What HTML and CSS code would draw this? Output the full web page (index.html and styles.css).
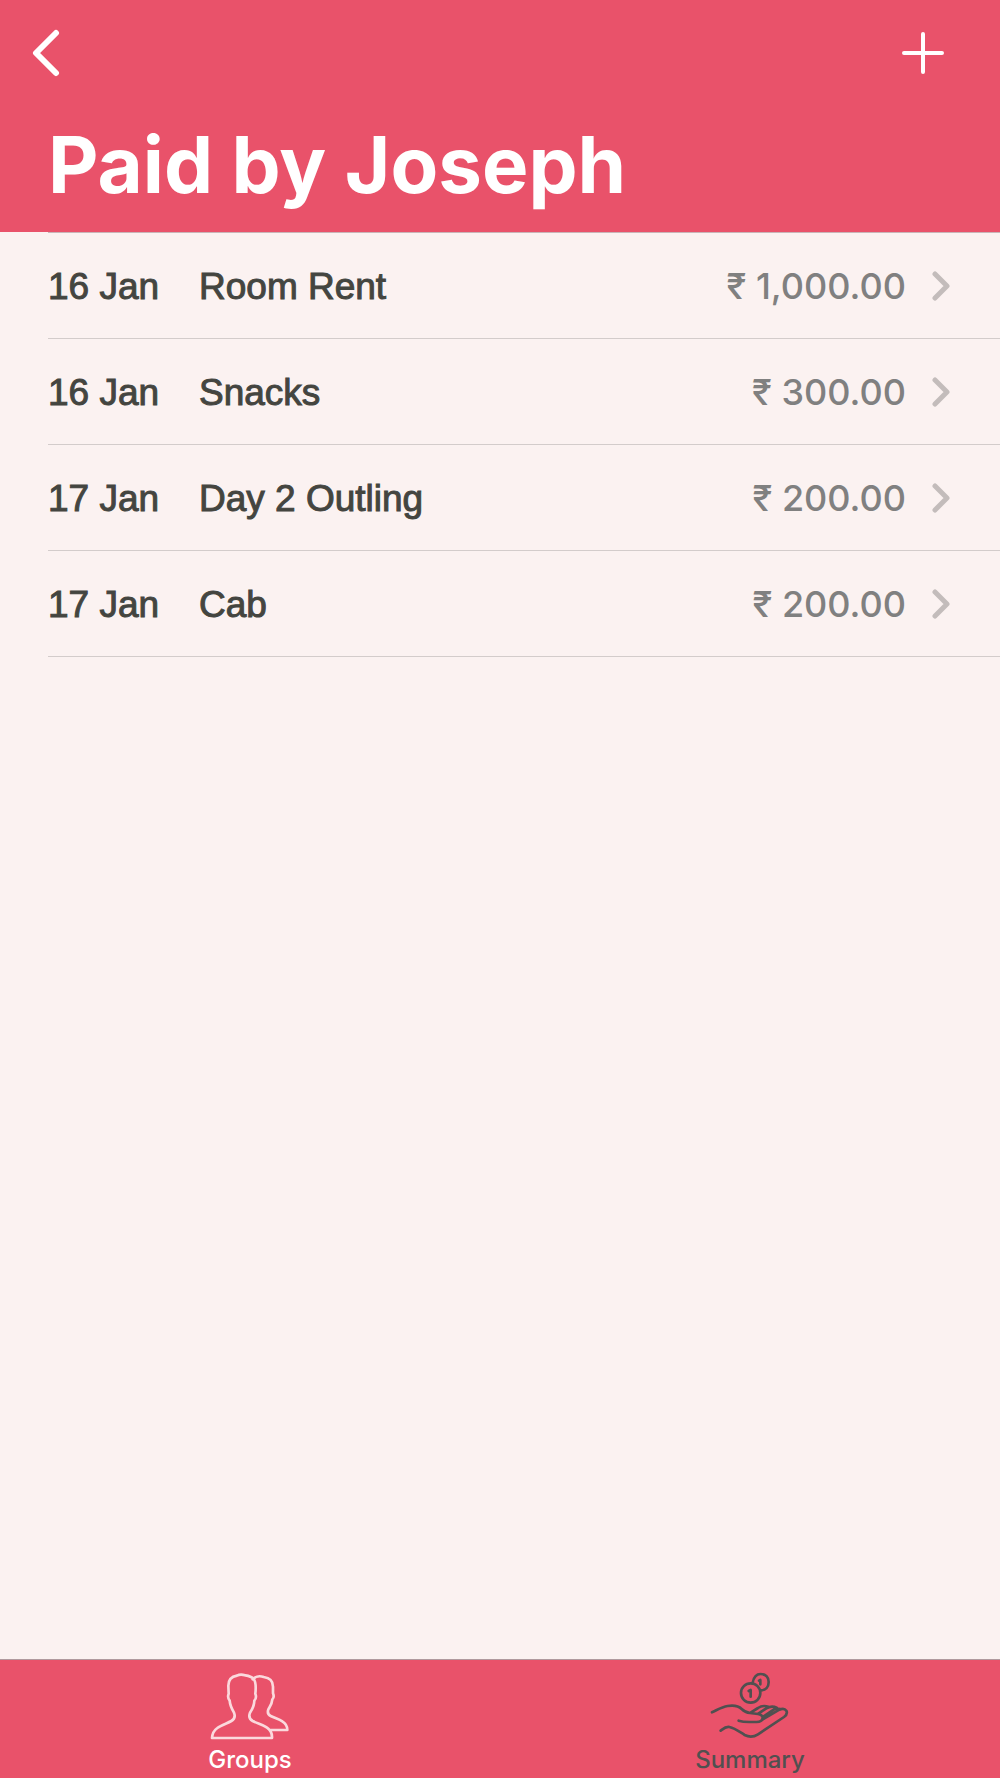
FILE: index.html
```html
<!DOCTYPE html>
<html lang="en">
<head>
<meta charset="utf-8">
<meta name="viewport" content="width=device-width, initial-scale=1">
<title>Paid by Joseph</title>
<link rel="stylesheet" href="styles.css">
</head>
<body>
<header class="header">
  <div class="nav">
    <button class="icon-button" type="button" aria-label="Back">
      <svg class="icon-back" viewBox="0 0 28 48" aria-hidden="true"><path d="M24 4 4 24l20 20"/></svg>
    </button>
    <button class="icon-button" type="button" aria-label="Add expense">
      <svg class="icon-add" viewBox="0 0 42 42" aria-hidden="true"><path d="M21 2v38M2 21h38"/></svg>
    </button>
  </div>
  <h1 class="title">Paid by Joseph</h1>
</header>
<main class="content">
  <ul class="expenses">
    <li><a class="expense" href="#room-rent">
      <span class="date">16 Jan</span><span class="name">Room Rent</span><span class="amount">₹ 1,000.00</span>
      <svg class="chevron" viewBox="0 0 18 30" aria-hidden="true"><path d="m3 3 12 12L3 27"/></svg>
    </a></li>
    <li><a class="expense" href="#snacks">
      <span class="date">16 Jan</span><span class="name">Snacks</span><span class="amount">₹ 300.00</span>
      <svg class="chevron" viewBox="0 0 18 30" aria-hidden="true"><path d="m3 3 12 12L3 27"/></svg>
    </a></li>
    <li><a class="expense" href="#day-2">
      <span class="date">17 Jan</span><span class="name">Day 2 Outling</span><span class="amount">₹ 200.00</span>
      <svg class="chevron" viewBox="0 0 18 30" aria-hidden="true"><path d="m3 3 12 12L3 27"/></svg>
    </a></li>
    <li><a class="expense" href="#cab">
      <span class="date">17 Jan</span><span class="name">Cab</span><span class="amount">₹ 200.00</span>
      <svg class="chevron" viewBox="0 0 18 30" aria-hidden="true"><path d="m3 3 12 12L3 27"/></svg>
    </a></li>
  </ul>
</main>
<nav class="tabs" aria-label="Sections">
  <a class="tab tab-active" href="#groups" aria-current="page">
    <svg class="tab-icon" viewBox="60 66 240 204" aria-hidden="true">
      <path d="M66 264h180c1-16-5-25-16-32-13-9-29-12-42-19-12-7-12-15-8-25 8-12 13-22 13-36 6-6 6-13 3-21 2-18 3-34-5-44-8-9-19-10-26-11-8-3-17-3-24 1-17 3-26 14-26 30l1 24c-3 8-2 15 3 21 1 14 6 24 13 36 4 10 4 18-8 25-12 7-30 12-42 21-10 7-15 15-16 30Z"/>
      <path d="M188 88c9-9 22-11 33-7 17 2 28 12 28 29v20c3 7 3 13-2 18-1 14-6 20-12 30-3 9-3 15 7 20 14 7 25 9 35 16 10 6 15 13 15 26h-50"/>
    </svg>
    <span>Groups</span>
  </a>
  <a class="tab" href="#summary">
    <svg class="tab-icon" viewBox="90 66 240 204" aria-hidden="true">
      <path d="M96 187c14-6 28-16 47-19 20-3 33 0 42 9 8 8 15 11 25 12l24 3c9 1 15 6 14 13-2 9-9 11-18 11h-22c-12 0-23-1-32-4"/>
      <path d="m213 187 21-13c9-6 19-8 31-4M236 190l23-15c10-6 21-7 31-2M250 200l32-22c6-4 12-3 18-1M247 209l51-30c9-4 17-3 21 3 4 8 0 14-7 19l-78 52c-14 9-27 9-40 2-15-9-28-20-46-24-11-2-18 5-26 11"/>
      <circle cx="212" cy="129" r="29"/>
      <path d="M218 98c3-16 11-26 24-26 15 0 24 10 24 24 0 15-9 25-24 25"/>
      <path d="m206 123 6-3v20M237 92l4-2v13"/>
    </svg>
    <span>Summary</span>
  </a>
</nav>
</body>
</html>
```
FILE: styles.css
```css
* {
  box-sizing: border-box;
}

body {
  margin: 0;
  min-height: 100vh;
  display: flex;
  flex-direction: column;
  background: #fbf2f1;
  color: #444540;
  font-family: Inter, "Noto Sans", sans-serif;
}

.header {
  background: #e9526a;
  color: #fff;
  padding: 25px 48px 7px 24px;
}

.nav {
  display: flex;
  justify-content: space-between;
  align-items: center;
}

.icon-button {
  display: flex;
  padding: 4px 8px;
  border: 0;
  background: none;
  color: inherit;
  cursor: pointer;
}

svg {
  fill: none;
  stroke: currentColor;
  stroke-linecap: round;
  stroke-linejoin: round;
}

.icon-back {
  width: 28px;
  height: 48px;
  stroke-width: 6px;
}

.icon-add {
  width: 42px;
  height: 42px;
  stroke-width: 4px;
}

.title {
  margin: 24px 0 0 24px;
  font-size: 78px;
  font-weight: 700;
  line-height: 120px;
}

.content {
  flex: 1;
}

.expenses {
  margin: 0;
  padding: 0 0 0 48px;
  list-style: none;
}

.expenses li {
  border-bottom: 1px solid #d3cccb;
}

.expenses li:first-child {
  border-top: 1px solid #c9b5b8;
}

.expense {
  display: flex;
  align-items: center;
  height: 105px;
  padding-right: 50px;
  color: inherit;
  text-decoration: none;
}

.date,
.name {
  padding-top: 2px;
  font-family: "Liberation Sans", Arial, sans-serif;
  font-size: 37px;
  line-height: 44px;
  -webkit-text-stroke: 1px currentColor;
}

.date {
  width: 151px;
}

.name {
  flex: 1;
}

.amount {
  color: #808080;
  font-size: 36px;
  font-weight: 500;
  line-height: 44px;
}

.chevron {
  width: 18px;
  height: 30px;
  margin-left: 26px;
  color: #c3bcbb;
  stroke-width: 5px;
}

.tabs {
  display: grid;
  grid-template-columns: 1fr 1fr;
  background: #e9526a;
  border-top: 1px solid #b09a9e;
}

.tab {
  display: flex;
  flex-direction: column;
  align-items: center;
  gap: 4px;
  padding: 12px 0 2px;
  color: #505050;
  font-size: 24px;
  font-weight: 500;
  line-height: 32px;
  text-decoration: none;
}

.tab-active {
  color: #fff;
}

.tab-icon {
  width: 80px;
  height: 68px;
  stroke-width: 8px;
}

.tab-active .tab-icon {
  color: #fbd9dd;
}
```
